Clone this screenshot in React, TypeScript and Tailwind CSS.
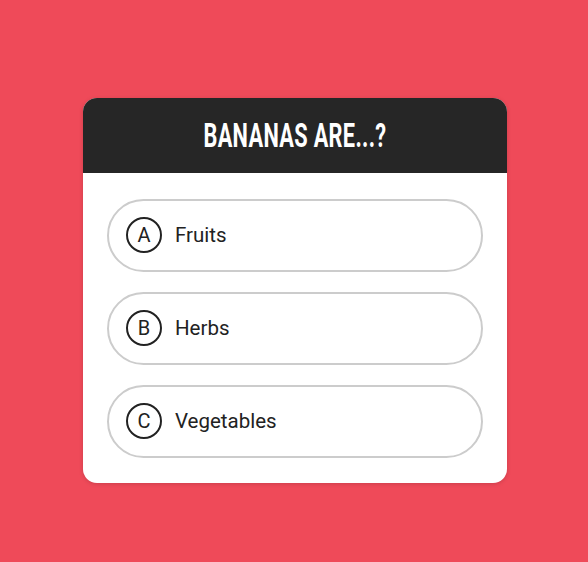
const OPTIONS = [
  { letter: "A", label: "Fruits" },
  { letter: "B", label: "Herbs" },
  { letter: "C", label: "Vegetables" },
];

export default function App() {
  return (
    <div
      className="w-[588px] h-[562px] bg-[#ef4a59] flex items-center justify-center"
      style={{ fontFamily: "Roboto, 'Liberation Sans', sans-serif" }}
    >
      <div className="w-[424px] mt-[18px] ml-[2px] bg-white rounded-[14px] overflow-hidden shadow-[0_1px_4px_rgba(0,0,0,0.15)]">
        {/* Header */}
        <div className="h-[75px] bg-[#262626] flex items-center justify-center">
          <h1 className="text-white font-bold text-[34px] leading-none uppercase tracking-[0.5px] scale-x-[0.64] whitespace-nowrap">
            Bananas are...?
          </h1>
        </div>

        {/* Options */}
        <div className="flex flex-col gap-[20px] px-[24px] pt-[26px] pb-[25px]">
          {OPTIONS.map((o) => (
            <button
              key={o.letter}
              className="h-[73px] w-full rounded-full border-2 border-[#cccccc] bg-white flex items-center gap-[13px] pl-[17px] text-left"
            >
              <span className="w-[36px] h-[36px] rounded-full border-2 border-[#222] flex items-center justify-center text-[20px] text-[#222] leading-none">
                {o.letter}
              </span>
              <span className="text-[20.5px] text-[#222]">{o.label}</span>
            </button>
          ))}
        </div>
      </div>
    </div>
  );
}
